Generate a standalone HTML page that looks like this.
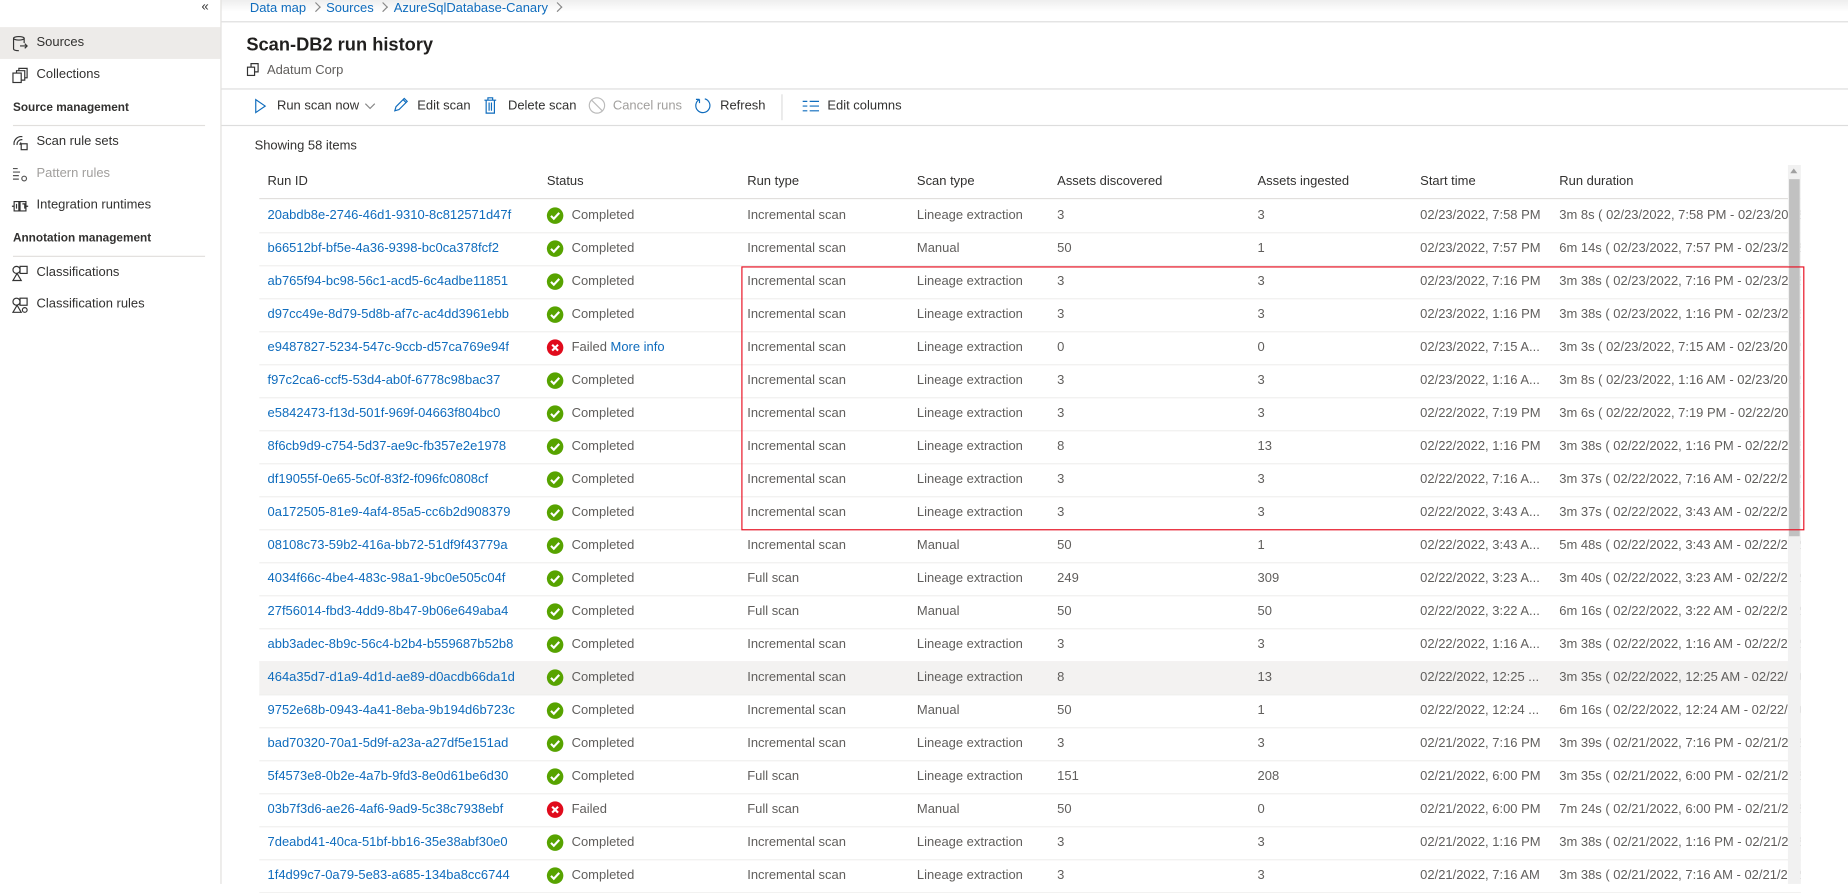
<!DOCTYPE html>
<html><head><meta charset="utf-8"><style>
html,body{margin:0;padding:0;width:1848px;height:884px;overflow:hidden;background:#fff}
#w{position:absolute;left:0;top:0;width:1568px;height:750px;transform:scale(1.17857);transform-origin:0 0;font-family:"Liberation Sans",sans-serif;font-size:11px;color:#323130}
.a{position:absolute;white-space:nowrap}
.sb{position:absolute;left:0;top:0;width:187px;height:750px;border-right:1px solid #e1dfdd;background:#fff}
.ni{position:absolute;left:10px;height:27px;line-height:27px;width:177px}
.ni svg{position:absolute;left:0;top:7px}
.ni span{position:absolute;left:21px}
.hd{position:absolute;left:11px;font-weight:bold;font-size:10px}
.dv{position:absolute;left:11px;width:163px;border-top:1px solid #e1dfdd}
.lk{color:#0f6cbd}
.row{position:absolute;left:220px;width:1308px;height:28px;border-bottom:1px solid #f0efee;line-height:28px;color:#605e5c}
.row span{position:absolute;white-space:nowrap}
.ok,.er{display:inline-block;width:14px;height:14px;border-radius:50%;position:absolute;top:7px}
.ok{background:#57a300}.er{background:#e00b1c}
.tb{position:absolute;top:82px;line-height:16px}
.tb svg{position:absolute;top:1px}
.gt{display:inline-block;width:5px;height:5px;border-top:1px solid #888;border-right:1px solid #888;transform:rotate(45deg);margin:0 6px 1px 5px}
</style></head><body><div id="w">
<div class="a" style="left:0;top:0;width:1568px;height:10px;background:linear-gradient(#eee,#fff)"></div>
<div class="sb">
<div class="a" style="left:171px;top:0px;font-size:11px;color:#333">«</div>
<div class="ni" style="top:23px;background:#edebe9;left:0;width:187px"><svg style="left:10px" width="14" height="14" viewBox="0 0 14 14" fill="none" stroke="#333"><ellipse cx="6" cy="2.5" rx="4.5" ry="1.5"/><path d="M1.5 2.5v9c0 1 2 1.5 4.5 1.5M10.5 2.5v4M7 9h6M11 7l2 2-2 2"/></svg><span style="left:31px">Sources</span></div>
<div class="ni" style="top:50px"><svg width="14" height="14" fill="none" stroke="#333"><rect x="1" y="5" width="7" height="8"/><path d="M4 5V3h7v8H8M6 3V1h7v8h-2"/></svg><span>Collections</span></div>
<div class="hd" style="top:86px">Source management</div>
<div class="dv" style="top:106px"></div>
<div class="ni" style="top:107px"><svg width="14" height="14" fill="none" stroke="#333"><path d="M9 2A6 6 0 0 0 2 9M9 4.5A4 4 0 0 0 4.5 9M8 7a2 2 0 0 0-1 2"/><rect x="8" y="8" width="5" height="5"/></svg><span>Scan rule sets</span></div>
<div class="ni" style="top:134px;color:#a19f9d"><svg width="14" height="14" fill="none" stroke="#555"><path d="M1 2h4M1 5h6M1 8h5M1 11h5"/><circle cx="10.5" cy="10.5" r="2"/></svg><span>Pattern rules</span></div>
<div class="ni" style="top:161px"><svg width="14" height="14" fill="none" stroke="#333"><path d="M0 7h2M12 7h2M2 3h4v8H2zM7 3h5v8H7zM4 5v4M9 5h2v4"/></svg><span>Integration runtimes</span></div>
<div class="hd" style="top:197px">Annotation management</div>
<div class="dv" style="top:217px"></div>
<div class="ni" style="top:218px"><svg width="14" height="14" fill="none" stroke="#333"><circle cx="4" cy="4" r="3"/><rect x="7" y="1" width="6" height="6"/><path d="M4.5 7L1 13h7z"/></svg><span>Classifications</span></div>
<div class="ni" style="top:245px"><svg width="14" height="14" fill="none" stroke="#333"><circle cx="4" cy="4" r="3"/><rect x="7" y="1" width="6" height="6"/><path d="M4.5 7L1 13h7z"/><circle cx="11" cy="11" r="2"/></svg><span>Classification rules</span></div>
</div>
<div class="a" style="left:212px;top:0;line-height:15px"><span class="lk">Data map</span><i class="gt"></i><span class="lk">Sources</span><i class="gt"></i><span class="lk">AzureSqlDatabase-Canary</span><i class="gt"></i></div>
<div class="a" style="left:188px;top:18px;width:1380px;border-top:1px solid #ddd"></div>
<div class="a" style="left:209px;top:30px;font-size:15.5px;font-weight:bold;color:#201f1e">Scan-DB2 run history</div>
<div class="a" style="left:209px;top:53px;color:#605e5c"><svg width="12" height="12" fill="none" stroke="#333" style="vertical-align:-2px"><rect x="1" y="4" width="6" height="7"/><path d="M4 4V1h6v7H7"/></svg>&nbsp; Adatum Corp</div>
<div class="a" style="left:188px;top:75px;width:1380px;border-top:1px solid #ddd"></div>
<svg class="a" style="left:215px;top:83px" width="12" height="14" fill="none" stroke="#0f6cbd"><path d="M2 1.5l8 5.5-8 5.5z"/></svg>
<div class="tb" style="left:235px">Run scan now</div>
<svg class="a" style="left:309px;top:86px" width="10" height="8" fill="none" stroke="#888"><path d="M1 2l4 4 4-4"/></svg>
<svg class="a" style="left:333px;top:82px" width="14" height="14" fill="none" stroke="#0f6cbd"><path d="M2 12l1-3.5 7-7 2.5 2.5-7 7zM9 2.5l2.5 2.5"/></svg>
<div class="tb" style="left:354px">Edit scan</div>
<svg class="a" style="left:410px;top:82px" width="12" height="15" fill="none" stroke="#0f6cbd"><path d="M1 3h10M4 3V1h4v2M2.5 3v11h7V3M5 5v7M7 5v7"/></svg>
<div class="tb" style="left:431px">Delete scan</div>
<svg class="a" style="left:499px;top:82px" width="15" height="15" fill="none" stroke="#bbb"><circle cx="7.5" cy="7.5" r="6.5"/><path d="M3 3l9 9"/></svg>
<div class="tb" style="left:520px;color:#a19f9d">Cancel runs</div>
<svg class="a" style="left:589px;top:82px" width="15" height="15" fill="none" stroke="#0f6cbd"><path d="M9 1.8A6 6 0 1 1 4.5 2.3M4.5 2.3V5.5M4.5 2.3H1.5"/></svg>
<div class="tb" style="left:611px">Refresh</div>
<div class="a" style="left:663px;top:80px;height:22px;border-left:1px solid #ddd"></div>
<svg class="a" style="left:681px;top:85px" width="14" height="10" stroke="#0f6cbd"><path d="M0 1h4M6 1h8M0 5h4M6 5h8M0 9h4M6 9h8"/></svg>
<div class="tb" style="left:702px">Edit columns</div>
<div class="a" style="left:188px;top:106px;width:1380px;border-top:1px solid #ddd"></div>
<div class="a" style="left:216px;top:118px;color:#323130">Showing 58 items</div>
<div class="row" style="top:140px;color:#323130;border-bottom-color:#e1dfdd"><span style="left:7px">Run ID</span><span style="left:244px">Status</span><span style="left:414px">Run type</span><span style="left:558px">Scan type</span><span style="left:677px">Assets discovered</span><span style="left:847px">Assets ingested</span><span style="left:985px">Start time</span><span style="left:1103px">Run duration</span></div>
<div id="rows"></div>
<div class="a" style="left:1517px;top:140px;width:11px;height:610px;background:#f1f1f1"></div>
<div class="a" style="left:1519px;top:143px;width:0;height:0;border:3px solid transparent;border-bottom:4px solid #a0a0a0;border-top:0"></div>
<div class="a" style="left:1518px;top:152px;width:9px;height:303px;background:#c1c1c1"></div>
<div class="a" style="left:629px;top:226px;width:900px;height:222px;border:1.5px solid #e81123"></div>
</div>
<script>
var d=[["20abdb8e-2746-46d1-9310-8c812571d47f",1,"Incremental scan","Lineage extraction","3","3","02/23/2022, 7:58 PM","3m 8s ( 02/23/2022, 7:58 PM - 02/23/2022, 8:01 PM )"],
["b66512bf-bf5e-4a36-9398-bc0ca378fcf2",1,"Incremental scan","Manual","50","1","02/23/2022, 7:57 PM","6m 14s ( 02/23/2022, 7:57 PM - 02/23/2022, 8:03 PM )"],
["ab765f94-bc98-56c1-acd5-6c4adbe11851",1,"Incremental scan","Lineage extraction","3","3","02/23/2022, 7:16 PM","3m 38s ( 02/23/2022, 7:16 PM - 02/23/2022, 7:19 PM )"],
["d97cc49e-8d79-5d8b-af7c-ac4dd3961ebb",1,"Incremental scan","Lineage extraction","3","3","02/23/2022, 1:16 PM","3m 38s ( 02/23/2022, 1:16 PM - 02/23/2022, 1:19 PM )"],
["e9487827-5234-547c-9ccb-d57ca769e94f",0,"Incremental scan","Lineage extraction","0","0","02/23/2022, 7:15 A...","3m 3s ( 02/23/2022, 7:15 AM - 02/23/2022, 7:18 AM )"],
["f97c2ca6-ccf5-53d4-ab0f-6778c98bac37",1,"Incremental scan","Lineage extraction","3","3","02/23/2022, 1:16 A...","3m 8s ( 02/23/2022, 1:16 AM - 02/23/2022, 1:19 AM )"],
["e5842473-f13d-501f-969f-04663f804bc0",1,"Incremental scan","Lineage extraction","3","3","02/22/2022, 7:19 PM","3m 6s ( 02/22/2022, 7:19 PM - 02/22/2022, 7:22 PM )"],
["8f6cb9d9-c754-5d37-ae9c-fb357e2e1978",1,"Incremental scan","Lineage extraction","8","13","02/22/2022, 1:16 PM","3m 38s ( 02/22/2022, 1:16 PM - 02/22/2022, 1:19 PM )"],
["df19055f-0e65-5c0f-83f2-f096fc0808cf",1,"Incremental scan","Lineage extraction","3","3","02/22/2022, 7:16 A...","3m 37s ( 02/22/2022, 7:16 AM - 02/22/2022, 7:19 AM )"],
["0a172505-81e9-4af4-85a5-cc6b2d908379",1,"Incremental scan","Lineage extraction","3","3","02/22/2022, 3:43 A...","3m 37s ( 02/22/2022, 3:43 AM - 02/22/2022, 3:46 AM )"],
["08108c73-59b2-416a-bb72-51df9f43779a",1,"Incremental scan","Manual","50","1","02/22/2022, 3:43 A...","5m 48s ( 02/22/2022, 3:43 AM - 02/22/2022, 3:49 AM )"],
["4034f66c-4be4-483c-98a1-9bc0e505c04f",1,"Full scan","Lineage extraction","249","309","02/22/2022, 3:23 A...","3m 40s ( 02/22/2022, 3:23 AM - 02/22/2022, 3:27 AM )"],
["27f56014-fbd3-4dd9-8b47-9b06e649aba4",1,"Full scan","Manual","50","50","02/22/2022, 3:22 A...","6m 16s ( 02/22/2022, 3:22 AM - 02/22/2022, 3:28 AM )"],
["abb3adec-8b9c-56c4-b2b4-b559687b52b8",1,"Incremental scan","Lineage extraction","3","3","02/22/2022, 1:16 A...","3m 38s ( 02/22/2022, 1:16 AM - 02/22/2022, 1:19 AM )"],
["464a35d7-d1a9-4d1d-ae89-d0acdb66da1d",1,"Incremental scan","Lineage extraction","8","13","02/22/2022, 12:25 ...","3m 35s ( 02/22/2022, 12:25 AM - 02/22/2022, 12:28 AM )"],
["9752e68b-0943-4a41-8eba-9b194d6b723c",1,"Incremental scan","Manual","50","1","02/22/2022, 12:24 ...","6m 16s ( 02/22/2022, 12:24 AM - 02/22/2022, 12:30 AM )"],
["bad70320-70a1-5d9f-a23a-a27df5e151ad",1,"Incremental scan","Lineage extraction","3","3","02/21/2022, 7:16 PM","3m 39s ( 02/21/2022, 7:16 PM - 02/21/2022, 7:19 PM )"],
["5f4573e8-0b2e-4a7b-9fd3-8e0d61be6d30",1,"Full scan","Lineage extraction","151","208","02/21/2022, 6:00 PM","3m 35s ( 02/21/2022, 6:00 PM - 02/21/2022, 6:03 PM )"],
["03b7f3d6-ae26-4af6-9ad9-5c38c7938ebf",2,"Full scan","Manual","50","0","02/21/2022, 6:00 PM","7m 24s ( 02/21/2022, 6:00 PM - 02/21/2022, 6:07 PM )"],
["7deabd41-40ca-51bf-bb16-35e38abf30e0",1,"Incremental scan","Lineage extraction","3","3","02/21/2022, 1:16 PM","3m 38s ( 02/21/2022, 1:16 PM - 02/21/2022, 1:19 PM )"],
["1f4d99c7-0a79-5e83-a685-134ba8cc6744",1,"Incremental scan","Lineage extraction","3","3","02/21/2022, 7:16 AM","3m 38s ( 02/21/2022, 7:16 AM - 02/21/2022, 7:19 AM )"]];
var h="",chk='<svg width="14" height="14" style="position:absolute;left:0;top:0"><path d="M3.5 7.2l2.4 2.4 4.6-5" stroke="#fff" stroke-width="1.8" fill="none"/></svg>',x='<svg width="14" height="14" style="position:absolute;left:0;top:0"><path d="M4.5 4.5l5 5M9.5 4.5l-5 5" stroke="#fff" stroke-width="1.8"/></svg>';
d.forEach(function(r,i){var t=169+28*i;var st=r[1]==1?'<i class="ok" style="left:244px">'+chk+'</i><span style="left:265px">Completed</span>':(r[1]==0?'<i class="er" style="left:244px">'+x+'</i><span style="left:265px">Failed <span class="lk" style="position:static">More info</span></span>':'<i class="er" style="left:244px">'+x+'</i><span style="left:265px">Failed</span>');
h+='<div class="row" style="top:'+t+'px;overflow:hidden'+(i==14?';background:#f3f2f1':'')+'"><span class="lk" style="left:7px">'+r[0]+'</span>'+st+'<span style="left:414px">'+r[2]+'</span><span style="left:558px">'+r[3]+'</span><span style="left:677px">'+r[4]+'</span><span style="left:847px">'+r[5]+'</span><span style="left:985px">'+r[6]+'</span><span style="left:1103px">'+r[7]+'</span></div>';});
document.getElementById("rows").innerHTML=h;
</script>
</body></html>
